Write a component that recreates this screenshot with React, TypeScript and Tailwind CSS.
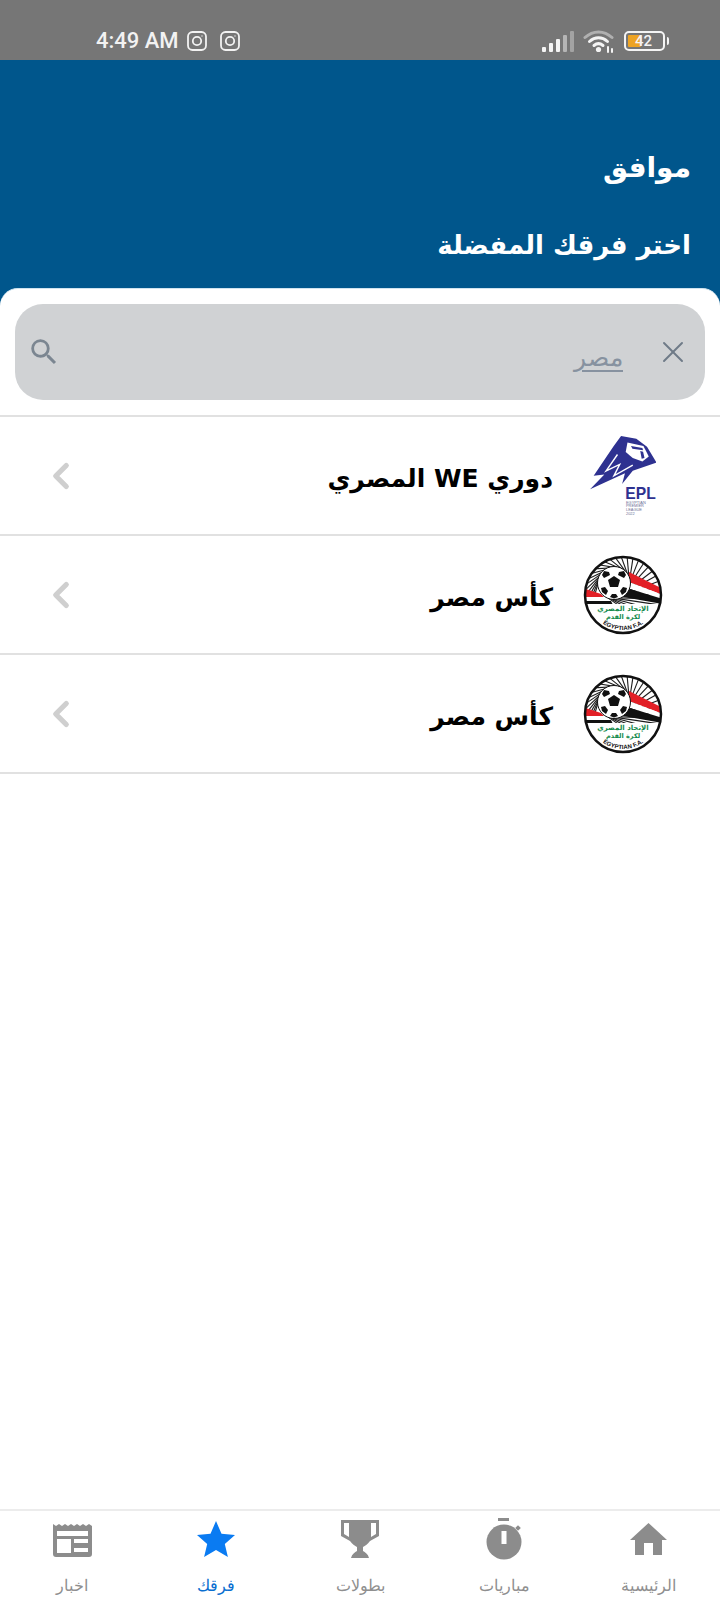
import { ChevronLeft, X } from "lucide-react";
import { MdSearch } from "react-icons/md";

const arabic = "font-['DejaVu_Sans',sans-serif]";

const rows = [
  { id: 1, title: "دوري WE المصري", logo: "epl" },
  { id: 2, title: "كأس مصر", logo: "efa" },
  { id: 3, title: "كأس مصر", logo: "efa" },
];

function InstagramIcon() {
  return (
    <svg width="20" height="20" viewBox="0 0 20 20" fill="none" stroke="#f2f2f2" strokeWidth="1.8">
      <rect x="1" y="1" width="18" height="18" rx="4.5" />
      <circle cx="10" cy="10" r="4.2" />
      <circle cx="15" cy="5" r="0.7" fill="#f2f2f2" stroke="none" />
    </svg>
  );
}

function SignalIcon() {
  return (
    <div className="flex h-[21px] items-end gap-[3px]">
      <div className="h-[5px] w-[4px] rounded-[1px] bg-[#f4f4f4]" />
      <div className="h-[9px] w-[4px] rounded-[1px] bg-[#f4f4f4]" />
      <div className="h-[13px] w-[4px] rounded-[1px] bg-[#f4f4f4]" />
      <div className="h-[17px] w-[4px] rounded-[1px] bg-[#b5b5b5]" />
      <div className="h-[21px] w-[4px] rounded-[1px] bg-[#a3a3a3]" />
    </div>
  );
}

function WifiIcon() {
  return (
    <svg width="32" height="24" viewBox="0 0 32 24" fill="none" strokeLinecap="round">
      <path d="M2 8.500C10 1 21 1 29 8.500" stroke="#b0b0b0" strokeWidth="3" />
      <path d="M6.500 12.500C12 7.500 19 7.500 24.500 12.500" stroke="#f4f4f4" strokeWidth="3" />
      <path d="M11 16.500C14 14 17 14 20 16.500" stroke="#f4f4f4" strokeWidth="3" />
      <circle cx="15.500" cy="20.500" r="2.600" fill="#f4f4f4" />
      <path d="M25 18v5M29 20v3" stroke="#f4f4f4" strokeWidth="2" />
    </svg>
  );
}

function BatteryIcon() {
  return (
    <div className="flex items-center gap-[2px]">
      <div className="relative h-[20px] w-[41px] rounded-[5px] border-2 border-[#f4f4f4] p-[2px]">
        <div className="h-full w-[13px] rounded-[1px] bg-[#eda323]" />
        <span className="absolute inset-0 flex items-center justify-center pr-[2px] font-['Roboto',sans-serif] text-[15px] font-medium leading-none text-[#f4f4f4]">
          42
        </span>
      </div>
      <div className="h-[8px] w-[2px] rounded-r-sm bg-[#f4f4f4]" />
    </div>
  );
}

// drawn in the crop's own coordinates, hence the odd viewBox
function EplLogo() {
  return (
    <svg width="66" height="80" viewBox="85 60 185 225" direction="ltr">
      <path
        fill="#2e3190"
        d="M172 60L215 68L245 90L272 135L205 158L175 195L183 165L85 210L125 168L95 172L150 90Z"
      />
      <path fill="none" stroke="#fff" strokeWidth="4" d="M162 112L130 158L168 140L152 172L205 142" />
      <path fill="#fff" d="M190 78L235 88L250 118L232 132L205 122L185 105Z" />
      <path fill="#2e3190" d="M200 88L232 94L234 100L204 96ZM226 102L234 104L238 122L230 124Z" />
      <text x="184" y="238" fontFamily="Liberation Sans" fontWeight="700" fontSize="44" fill="#2e3190" direction="ltr">
        EPL
      </text>
      <text x="186" y="250" fontFamily="Liberation Sans" fontSize="11" fill="#6c6f96" direction="ltr">EGYPTIAN</text>
      <text x="186" y="261" fontFamily="Liberation Sans" fontSize="11" fill="#6c6f96" direction="ltr">PREMIER</text>
      <text x="186" y="272" fontFamily="Liberation Sans" fontSize="11" fill="#6c6f96" direction="ltr">LEAGUE</text>
      <text x="186" y="283" fontFamily="Liberation Sans" fontSize="11" fill="#6c6f96" direction="ltr">2022</text>
    </svg>
  );
}

function EfaLogo({ id }: { id: number }) {
  // swirl of lines from the rim towards the ball
  const rays = Array.from({ length: 30 }, (_, i) => {
    const a = ((150 + i * 9) * Math.PI) / 180;
    const b = a + 1.1;
    return {
      x1: 40 + 39 * Math.cos(a),
      y1: 40 + 39 * Math.sin(a),
      x2: 31 + 16 * Math.cos(b),
      y2: 28 + 16 * Math.sin(b),
    };
  });
  return (
    <svg width="80" height="80" viewBox="0 0 80 80">
      <defs>
        <clipPath id={`efa-clip-${id}`}>
          <circle cx="40" cy="40" r="38" />
        </clipPath>
        <path id={`efa-arc-${id}`} d="M10 58A35 35 0 0 0 70 58" />
      </defs>
      <circle cx="40" cy="40" r="38" fill="#fff" />
      <g clipPath={`url(#efa-clip-${id})`}>
        {rays.map((ray, i) => (
          <line key={i} x1={ray.x1} y1={ray.y1} x2={ray.x2} y2={ray.y2} stroke="#1c1c1c" strokeWidth="1.100" />
        ))}
        <path fill="#e21f26" d="M46 17L80 34V40L46 27ZM0 33L18 39L24 45L0 42Z" />
        <path fill="#fff" d="M46 27L80 40V44L44 33ZM0 42H24L27 47H0Z" />
        <path fill="#111" d="M44 33L80 44V49L40 42ZM0 46H28L30 50H0Z" />
        <rect x="0" y="49" width="80" height="31" fill="#fff" />
      </g>
      <circle cx="31" cy="28" r="16.500" fill="#fff" stroke="#111" strokeWidth="1" />
      <path
        fill="#111"
        d="M31 21L37 25L35 32H27L25 25ZM21 16L26 17L27 20L21 23L19 20ZM41 16L36 17L35 20L41 23L43 20ZM18 33L22 32L25 36L23 40L19 37ZM44 33L40 32L37 36L39 40L43 37ZM29 39H33L35 42L31 43.500L27 42Z"
      />
      <text x="40" y="56" textAnchor="middle" direction="rtl" fontFamily="DejaVu Sans" fontSize="7" fontWeight="700" fill="#138a4b">
        الإتحاد المصري
      </text>
      <text x="40" y="63.500" textAnchor="middle" direction="rtl" fontFamily="DejaVu Sans" fontSize="6.500" fontWeight="700" fill="#138a4b">
        لكرة القدم
      </text>
      <text fontFamily="Liberation Sans" fontSize="6" fontWeight="700" fill="#111" direction="ltr">
        <textPath href={`#efa-arc-${id}`} startOffset="50%" textAnchor="middle">
          EGYPTIAN F.A.
        </textPath>
      </text>
      <circle cx="40" cy="40" r="38" fill="none" stroke="#111" strokeWidth="2.500" />
    </svg>
  );
}

function HomeIcon() {
  return (
    <svg width="37" height="33" viewBox="0 0 37 33" fill="#8c8c8c">
      <path d="M18.500 0L37 17H32V32H23V20H14V32H5V17H0Z" />
    </svg>
  );
}

function TimerIcon() {
  return (
    <svg width="36" height="42" viewBox="0 0 36 42">
      <rect x="12" y="0" width="11" height="3" fill="#8c8c8c" />
      <circle cx="18" cy="24" r="17.500" fill="#8c8c8c" />
      <rect x="30" y="8" width="4" height="4" transform="rotate(45 32 10)" fill="#8c8c8c" />
      <rect x="15.500" y="13" width="5" height="13" fill="#fff" />
    </svg>
  );
}

function TrophyIcon() {
  return (
    <svg width="40" height="40" viewBox="0 0 40 40" fill="#8c8c8c">
      <path
        fillRule="evenodd"
        d="M1 1h38v16l-9 5c-2 3-5 5-7 6v4c2 1 5 3 6 7H11c1-4 4-6 6-7v-4c-2-1-5-3-7-6l-9-5zM4 4v11l5 3V4zM31 4v14l5-3V4z"
      />
    </svg>
  );
}

function StarIcon() {
  return (
    <svg width="38" height="36" viewBox="0 0 38 36" fill="#0a7bf2">
      <path d="M19 0l5.500 12.800 13.500 1.200-10.200 9 3.100 13L19 29l-11.900 7 3.100-13L0 14l13.500-1.200z" />
    </svg>
  );
}

function NewsIcon() {
  return (
    <svg width="39" height="35" viewBox="0 0 39 35">
      <path
        fill="#8c8c8c"
        d="M0 2l3 2 3-2 3 2 3-2 3 2 3-2 3 2 3-2 3 2 3-2 3 2 3-2 3 2V32a3 3 0 0 1-3 3H3a3 3 0 0 1-3-3z"
      />
      <rect x="4" y="9" width="31" height="5" fill="#fff" />
      <rect x="4" y="17" width="14" height="14" fill="#fff" />
      <rect x="21" y="17" width="14" height="4" fill="#fff" />
      <rect x="21" y="26" width="14" height="4" fill="#fff" />
    </svg>
  );
}

const tabs = [
  { label: "الرئيسية", icon: <HomeIcon />, active: false },
  { label: "مباريات", icon: <TimerIcon />, active: false },
  { label: "بطولات", icon: <TrophyIcon />, active: false },
  { label: "فرقك", icon: <StarIcon />, active: true },
  { label: "اخبار", icon: <NewsIcon />, active: false },
];

export default function App() {
  return (
    <div dir="rtl" className={`flex h-[1600px] w-[720px] flex-col overflow-hidden bg-white ${arabic}`}>
      {/* Status bar */}
      <div dir="ltr" className="flex h-[60px] items-end justify-between bg-[#767676] pb-[7px] pl-[96px] pr-[51px]">
        <div className="flex items-center gap-[13px]">
          <div className="flex items-center gap-[8px]">
            <span className="font-['Roboto',sans-serif] text-[22px] font-medium leading-[24px] text-[#f2f2f2]">4:49 AM</span>
            <InstagramIcon />
          </div>
          <InstagramIcon />
        </div>
        <div className="flex items-center gap-[9px]">
          <SignalIcon />
          <WifiIcon />
          <BatteryIcon />
        </div>
      </div>

      {/* Header */}
      <div className="flex h-[246px] flex-col bg-[#00568c] px-[29px] pt-[92px] text-white">
        <div className="text-[28px] font-bold leading-[32px]">موافق</div>
        <div className="mt-[45px] text-[26px] font-bold leading-[32px]">اختر فرقك المفضلة</div>
      </div>

      {/* List */}
      <div className="relative -mt-[18px] flex flex-1 flex-col rounded-t-[18px] border-t border-[#cfe3ef] bg-white">
        <div className="px-[15px] pt-[15px]">
          <div className="flex h-[96px] items-center rounded-[28px] bg-[#d0d2d4] pl-[12px] pr-[14px]">
            <X size={36} strokeWidth={1.3} className="text-[#6f7b88]" />
            <span className="mr-[32px] flex-1 pt-[12px] text-[25px] font-light text-[#8792a0] underline underline-offset-4">مصر</span>
            <MdSearch size={34} className="text-[#7b8691]" />
          </div>
        </div>
        <div className="mt-[15px] border-t-2 border-[#e1e1e1]">
          {rows.map((row) => (
            <div key={row.id} className="flex h-[119px] items-center border-b-2 border-[#e1e1e1] pl-[40px] pr-[57px]">
              <div className="flex w-[80px] justify-center">{row.logo === "epl" ? <EplLogo /> : <EfaLogo id={row.id} />}</div>
              <div className="mr-[30px] mt-[6px] flex-1 text-[25px] font-bold text-black">{row.title}</div>
              <ChevronLeft size={42} strokeWidth={3} className="text-[#cfcfcf]" />
            </div>
          ))}
        </div>
      </div>

      {/* Bottom nav */}
      <div className="grid h-[91px] grid-cols-5 border-t-2 border-[#ececec] bg-white">
        {tabs.map((tab) => (
          <div key={tab.label} className="flex flex-col items-center">
            <div className="flex h-[56px] items-center justify-center">{tab.icon}</div>
            <span className={`mt-[9px] text-[16px] font-light leading-[20px] ${tab.active ? "text-[#0a6fd0]" : "text-[#8f8f8f]"}`}>
              {tab.label}
            </span>
          </div>
        ))}
      </div>
    </div>
  );
}
